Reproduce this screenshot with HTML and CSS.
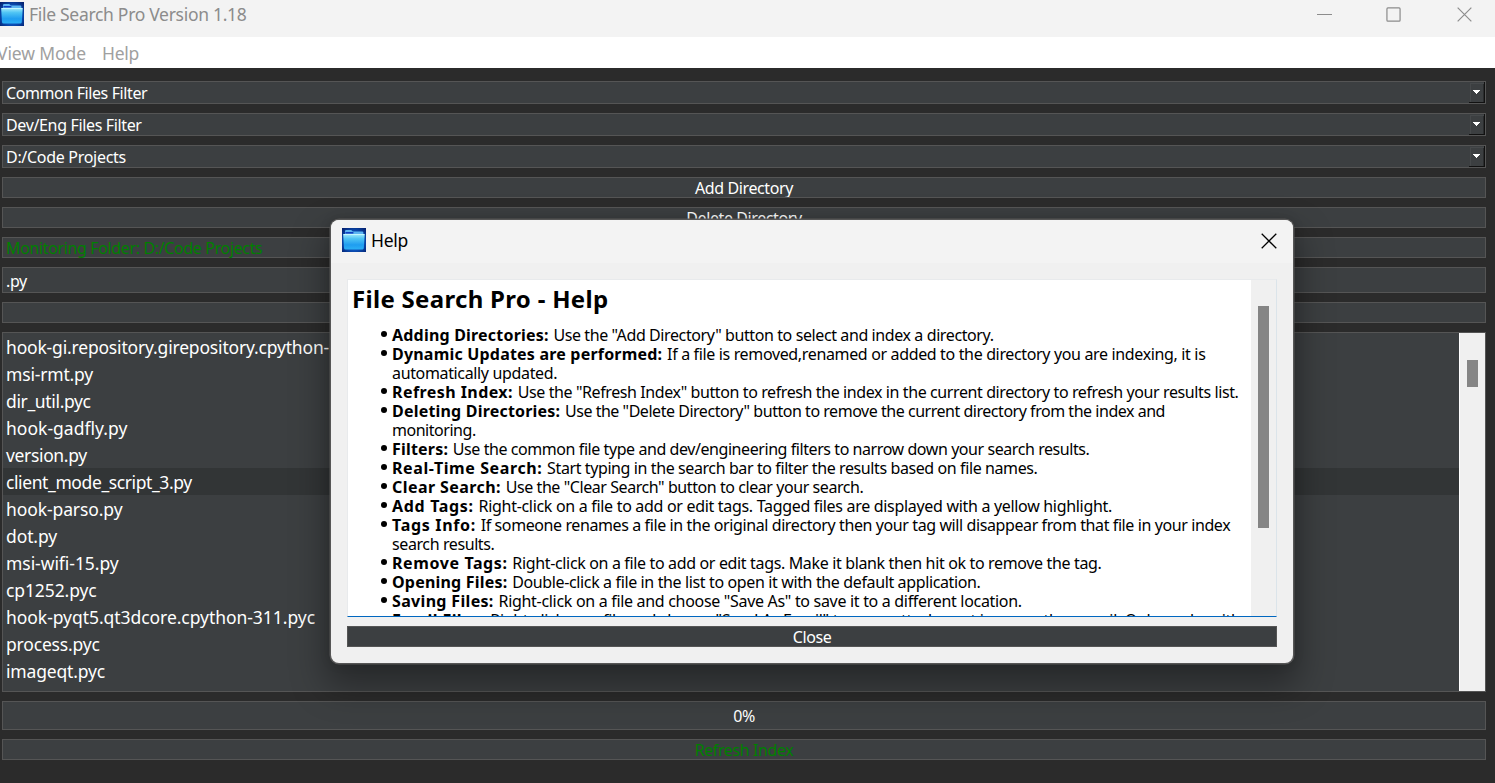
FILE: index.html
```html
<!DOCTYPE html>
<html lang="en">
<head>
<meta charset="utf-8">
<title>File Search Pro Version 1.18</title>
<link rel="stylesheet" href="styles.css">
</head>
<body>
<svg width="0" height="0" class="defs" aria-hidden="true">
  <defs>
    <radialGradient id="tile" cx=".5" cy=".55" r=".7"><stop offset="0" stop-color="#1275d8"/><stop offset=".55" stop-color="#0b50b8"/><stop offset="1" stop-color="#04216f"/></radialGradient>
    <linearGradient id="front" x1="0" y1="0" x2="0" y2="1"><stop offset="0" stop-color="#a4ecfa"/><stop offset=".3" stop-color="#4fc4f4"/><stop offset=".7" stop-color="#1f9df0"/><stop offset="1" stop-color="#2bb0f5"/></linearGradient>
    <symbol id="folder" viewBox="0 0 24 24">
      <rect width="24" height="24" fill="url(#tile)"/>
      <path d="M3 3.2q0-1.2 1.2-1.2h5l1.6 1.6h9.4q1.2 0 1.2 1.2V9H3z" fill="#5cb5f2"/>
      <path d="M3.400 4h8v1.600h-8z" fill="#123fc0"/>
      <path d="M2 6h19.800q1 0 .9 1l-.9 13q-.1 1.500-1.600 1.500H3.600q-1.500 0-1.600-1.500L1.200 7q-.1-1 .8-1z" fill="url(#front)"/>
      <path d="M1.500 6.500h21" stroke="#c2f7ff" stroke-width="1"/>
    </symbol>
    <symbol id="cross" viewBox="0 0 16 16"><path d="M.7.7l14.600 14.600M15.300.7L.7 15.300" fill="none" stroke="currentColor" stroke-width="1.250"/></symbol>
  </defs>
</svg>

<header class="titlebar">
  <svg class="app-icon"><use href="#folder"/></svg>
  <span class="title">File Search Pro Version 1.18</span>
  <div class="controls">
    <svg width="15" height="16" viewBox="0 0 15 16"><path d="M0 7.500h15" stroke="currentColor"/></svg>
    <svg width="15" height="15" viewBox="0 0 16 16"><rect x="1" y="1" width="14" height="14" rx="1" fill="none" stroke="currentColor" stroke-width="1.300"/></svg>
    <svg width="15" height="15"><use href="#cross"/></svg>
  </div>
</header>
<nav class="menubar"><span>View Mode</span><span class="m2">Help</span></nav>

<main class="panel">
  <div class="field combo"><span>Common Files Filter</span><i class="drop"><svg width="7" height="4"><path d="M0 0h7v1H6v1H5v1H4v1H3V3H2V2H1V1H0z" fill="#fff"/></svg></i></div>
  <div class="field combo c2"><span>Dev/Eng Files Filter</span><i class="drop"><svg width="7" height="4"><path d="M0 0h7v1H6v1H5v1H4v1H3V3H2V2H1V1H0z" fill="#fff"/></svg></i></div>
  <div class="field combo c3"><span>D:/Code Projects</span><i class="drop"><svg width="7" height="4"><path d="M0 0h7v1H6v1H5v1H4v1H3V3H2V2H1V1H0z" fill="#fff"/></svg></i></div>
  <div class="field button">Add Directory</div>
  <div class="field button">Delete Directory</div>
  <div class="field status">Monitoring Folder: D:/Code Projects</div>
  <div class="field search">.py</div>
  <div class="field button"></div>
  <div class="field results">
    <ul class="files">
      <li class="t1">hook-gi.repository.girepository.cpython-</li>
      <li class="t1">msi-rmt.py</li>
      <li class="t3">dir_util.pyc</li>
      <li class="t4">hook-gadfly.py</li>
      <li class="t3">version.py</li>
      <li class="current">client_mode_script_3.py</li>
      <li>hook-parso.py</li>
      <li>dot.py</li>
      <li class="t2">msi-wifi-15.py</li>
      <li>cp1252.pyc</li>
      <li class="t2">hook-pyqt5.qt3dcore.cpython-311.pyc</li>
      <li class="t1">process.pyc</li>
      <li class="t1">imageqt.pyc</li>
    </ul>
    <div class="track"><div class="thumb"></div></div>
  </div>
  <div class="field progress">0%</div>
  <div class="field button green">Refresh Index</div>
</main>

<section class="dialog">
  <header class="dialog-head">
    <svg class="app-icon"><use href="#folder"/></svg>
    <span class="dialog-title">Help</span>
    <svg class="dialog-x" width="16" height="16"><use href="#cross"/></svg>
  </header>
  <div class="dialog-body">
    <div class="browser">
      <article class="doc">
        <h1>File Search Pro - Help</h1>
        <ul>
          <li><b>Adding Directories:</b> Use the "Add Directory" button to select and index a directory.</li>
          <li class="s34"><b>Dynamic Updates are performed:</b> If a file is removed,renamed or added to the directory you are indexing, it is<br>automatically updated.</li>
          <li><b class="w2">Refresh Index:</b> Use the "Refresh Index" button to refresh the index in the current directory to refresh your results list.</li>
          <li class="s47"><b>Deleting Directories:</b> Use the "Delete Directory" button to remove the current directory from the index and<br>monitoring.</li>
          <li class="s43"><b>Filters:</b> Use the common file type and dev/engineering filters to narrow down your search results.</li>
          <li><b class="w3">Real-Time Search:</b> Start typing in the search bar to filter the results based on file names.</li>
          <li class="s43"><b class="w2">Clear Search:</b> Use the "Clear Search" button to clear your search.</li>
          <li class="s31"><b class="w4">Add Tags:</b> Right-click on a file to add or edit tags. Tagged files are displayed with a yellow highlight.</li>
          <li><b class="w4">Tags Info:</b> If someone renames a file in the original directory then your tag will disappear from that file in your index<br>search results.</li>
          <li class="s34"><b class="w3">Remove Tags:</b> Right-click on a file to add or edit tags. Make it blank then hit ok to remove the tag.</li>
          <li class="s37"><b>Opening Files:</b> Double-click a file in the list to open it with the default application.</li>
          <li class="s31"><b class="w5">Saving Files:</b> Right-click on a file and choose "Save As" to save it to a different location.</li>
          <li class="s31"><b class="w2">Email Files:</b> Right-click on a file and choose "Send As Email" to open attachment in your other email. Only works with</li>
        </ul>
      </article>
      <div class="doc-track"><div class="doc-thumb"></div></div>
    </div>
    <div class="field button close">Close</div>
  </div>
</section>
</body>
</html>
```
FILE: styles.css
```css
* { box-sizing: border-box; margin: 0; padding: 0; }
body {
  width: 1495px; height: 783px; overflow: hidden;
  background: #2b2b2b; color: #fff;
  font-family: "Noto Sans", "Open Sans", sans-serif;
  font-size: 16px; letter-spacing: -.4px; white-space: nowrap;
  display: flex; flex-direction: column;
}
.defs { position: absolute; }
svg { display: block; flex: none; }
.app-icon { width: 24px; height: 24px; }

.titlebar { height: 37px; flex: none; background: #f3f3f3; color: #8c8c8c; display: flex; align-items: flex-start; padding-top: 2px; }
.title { margin-left: 5px; font-size: 17.5px; line-height: 25px; letter-spacing: -.3px; }
.controls { margin-left: auto; margin-right: 23px; display: flex; padding-top: 5px; gap: 54px; }
.controls svg:nth-child(3) { margin-left: 2px; }

.menubar { height: 31px; flex: none; background: #fff; color: #a0a0a0; font-size: 17.5px; line-height: 33px; letter-spacing: -.3px; display: flex; }
.menubar span:first-child { margin-left: -3px; letter-spacing: -.1px; }
.m2 { margin-left: 16px; }

.panel { flex: 1; display: flex; flex-direction: column; gap: 9px; padding: 13px 9px 0 2px; }
.field { background: #3c3f41; border: 1px solid #555; flex: none; }
.combo { height: 23px; display: flex; align-items: center; justify-content: space-between; padding-left: 3px; line-height: 21px; overflow: hidden; }
.combo span { padding-top: 2px; }
.c2 { letter-spacing: -.35px; }
.c3 { letter-spacing: -.3px; }
.drop { width: 16px; height: 21px; border-right: 1px solid #111; border-bottom: 1px solid #111; display: flex; align-items: center; justify-content: center; box-shadow: inset 1px 1px #3c3f41, inset 2px 2px #46494b, inset -1px 0 #2a2c2d; }
.button { height: 21px; line-height: 20px; text-align: center; overflow: hidden; }
.status { height: 21px; line-height: 20px; padding-left: 3px; color: #008000; letter-spacing: -.36px; }
.search { height: 26px; line-height: 26px; padding-left: 3px; }
.progress { height: 29px; line-height: 28px; text-align: center; }
.green { color: #008000; }

.results { height: 360px; display: flex; }
.files { flex: 1; list-style: none; font-size: 17.5px; letter-spacing: -.1px; }
.files li { height: 27px; line-height: 29px; padding-left: 3px; }
.files .current { background: #323536; letter-spacing: -.4px; }
.files .t1 { letter-spacing: -.18px; }
.files .t2 { letter-spacing: -.05px; }
.files .t3 { letter-spacing: -.35px; }
.files .t4 { letter-spacing: .02px; }
.track { width: 26px; background: #f0f0f0; border-left: 1px solid #fff; padding: 27px 7px 0; }
.thumb { width: 11px; height: 27px; background: #858585; }

.dialog {
  position: absolute; left: 331px; top: 220px; width: 962px; height: 443px;
  background: #f0f0f0; color: #000; border-radius: 8px;
  box-shadow: 0 0 0 1.500px #565656, 0 18px 34px 6px rgba(0,0,0,.34), 0 0 12px rgba(0,0,0,.16);
  display: flex; flex-direction: column;
}
.dialog-head { height: 43px; flex: none; background: #f3f3f3; border-radius: 8px 8px 0 0; display: flex; padding: 8px 16.5px 0 11px; }
.dialog-title { margin-left: 5px; font-size: 17.5px; line-height: 25px; letter-spacing: -.3px; }
.dialog-x { margin: 4.5px 0 0 auto; }
.dialog-body { flex: 1; padding: 16px; display: flex; flex-direction: column; gap: 9px; }
.browser { height: 338px; border: 1px solid #e8eaec; border-right-color: #dbe4ea; border-bottom-color: #0067c0; display: flex; overflow: hidden; }
.doc { flex: 1; background: #fff; padding: 4px 0 0 4px; overflow: hidden; }
.doc h1 { font-size: 24px; font-weight: bold; line-height: 30px; letter-spacing: .3px; }
.doc ul { list-style: none; padding: 12px 0 0 40px; }
.doc li { line-height: 19px; position: relative; }
.doc li::before { content: ""; position: absolute; left: -11px; top: 5px; width: 6px; height: 6px; border-radius: 50%; background: #000; }
.doc b { letter-spacing: .2px; margin-right: 1px; }
.doc .w2 { letter-spacing: .43px; }
.doc .w3 { letter-spacing: .6px; }
.doc .w4 { letter-spacing: .68px; }
.doc .w5 { letter-spacing: .33px; }
.s31 { letter-spacing: -.31px; }
.s34 { letter-spacing: -.35px; }
.s37 { letter-spacing: -.37px; }
.s43 { letter-spacing: -.43px; }
.s47 { letter-spacing: -.47px; }
.doc-track { width: 25px; background: #f0f0f0; padding: 26px 7px 0; }
.doc-thumb { width: 11px; height: 222px; background: #858585; }
.close { color: #fff; }
```
